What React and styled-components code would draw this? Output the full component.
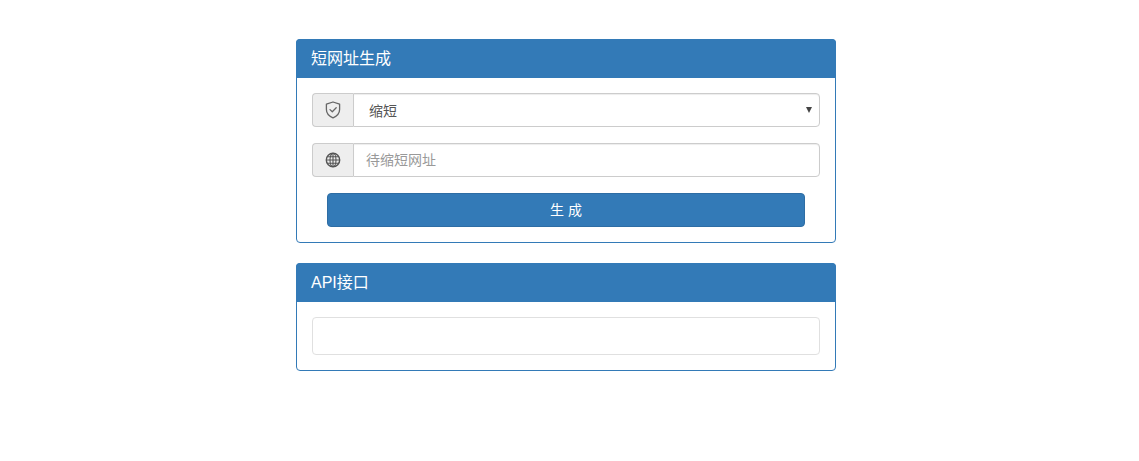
import styled, { createGlobalStyle } from "styled-components";

const GlobalStyle = createGlobalStyle`
  * {
    box-sizing: border-box;
  }
  body {
    margin: 0;
    background: #fff;
    font-family: "Liberation Sans", "Noto Sans CJK SC", sans-serif;
    font-size: 14px;
    color: #333;
  }
`;

const Page = styled.div`
  width: 540px;
  margin-left: 296px;
  padding-top: 39px;
  display: flex;
  flex-direction: column;
  gap: 20px;
`;

const Panel = styled.section`
  border: 1px solid #337ab7;
  border-radius: 4px;
  background: #fff;
`;

const PanelHeading = styled.h3`
  height: 39px;
  margin: -1px -1px 0;
  padding: 0 15px;
  background: #337ab7;
  border-radius: 4px 4px 0 0;
  color: #fff;
  font-size: 16px;
  font-weight: 400;
  line-height: 39px;
`;

const PanelBody = styled.div`
  padding: 15px;
  display: flex;
  flex-direction: column;
  gap: 16px;
`;

const InputGroup = styled.div`
  position: relative;
  display: flex;
  height: 34px;
`;

const Addon = styled.span`
  flex: 0 0 41px;
  display: flex;
  align-items: center;
  justify-content: center;
  background: #eee;
  border: 1px solid #ccc;
  border-right: none;
  border-radius: 4px 0 0 4px;
  color: #555;
`;

const Select = styled.select`
  flex: 1;
  min-width: 0;
  appearance: none;
  padding: 1px 12px 0 11px;
  background: #fff;
  border: 1px solid #ccc;
  border-radius: 0 4px 4px 0;
  box-shadow: inset 0 1px 1px rgba(0, 0, 0, 0.075);
  color: #555;
  font: inherit;
`;

const Caret = styled.span`
  position: absolute;
  right: 8px;
  top: 14px;
  width: 0;
  height: 0;
  border-left: 3px solid transparent;
  border-right: 3px solid transparent;
  border-top: 6px solid #444;
  pointer-events: none;
`;

const Input = styled.input`
  flex: 1;
  min-width: 0;
  padding: 0 12px;
  background: #fff;
  border: 1px solid #ccc;
  border-radius: 0 4px 4px 0;
  box-shadow: inset 0 1px 1px rgba(0, 0, 0, 0.075);
  color: #555;
  font: inherit;

  &::placeholder {
    color: #999;
    opacity: 1;
  }
`;

const SubmitButton = styled.button`
  align-self: center;
  width: 478px;
  height: 34px;
  padding: 0 0 2px;
  background: #337ab7;
  border: 1px solid #2e6da4;
  border-radius: 4px;
  color: #fff;
  font: inherit;
  cursor: pointer;
`;

const Well = styled.div`
  height: 38px;
  border: 1px solid #e0e0e0;
  border-radius: 4px;
  background: #fff;
`;

const ShieldIcon = () => (
  <svg width="16" height="18" viewBox="0 0 16 18" fill="none" stroke="#666" strokeWidth="1.3">
    <path d="M8 1 L14.6 3.2 V8.6 C14.6 12.6 11.6 15.4 8 16.9 C4.4 15.4 1.4 12.6 1.4 8.6 V3.2 Z" strokeLinejoin="round" />
    <path d="M5 8.6 L7.3 10.8 L11.2 6.8" strokeLinecap="round" strokeLinejoin="round" />
  </svg>
);

const GlobeIcon = () => (
  <svg width="16" height="16" viewBox="0 0 16 16" fill="none" stroke="#555" strokeWidth="1.1">
    <circle cx="8" cy="8" r="6.7" strokeWidth="1.4" />
    <ellipse cx="8" cy="8" rx="3" ry="6.7" />
    <path d="M8 1.3 V14.7 M1.3 8 H14.7 M2.3 4.7 H13.7 M2.3 11.3 H13.7" />
  </svg>
);

const App = () => (
  <>
    <GlobalStyle />
    <Page>
      <Panel>
        <PanelHeading>短网址生成</PanelHeading>
        <PanelBody>
          <InputGroup>
            <Addon>
              <ShieldIcon />
            </Addon>
            <Select defaultValue="shorten">
              <option value="shorten">&nbsp;缩短</option>
            </Select>
            <Caret />
          </InputGroup>
          <InputGroup>
            <Addon>
              <GlobeIcon />
            </Addon>
            <Input type="text" placeholder="待缩短网址" />
          </InputGroup>
          <SubmitButton>生 成</SubmitButton>
        </PanelBody>
      </Panel>
      <Panel>
        <PanelHeading>API接口</PanelHeading>
        <PanelBody>
          <Well />
        </PanelBody>
      </Panel>
    </Page>
  </>
);

export default App;
